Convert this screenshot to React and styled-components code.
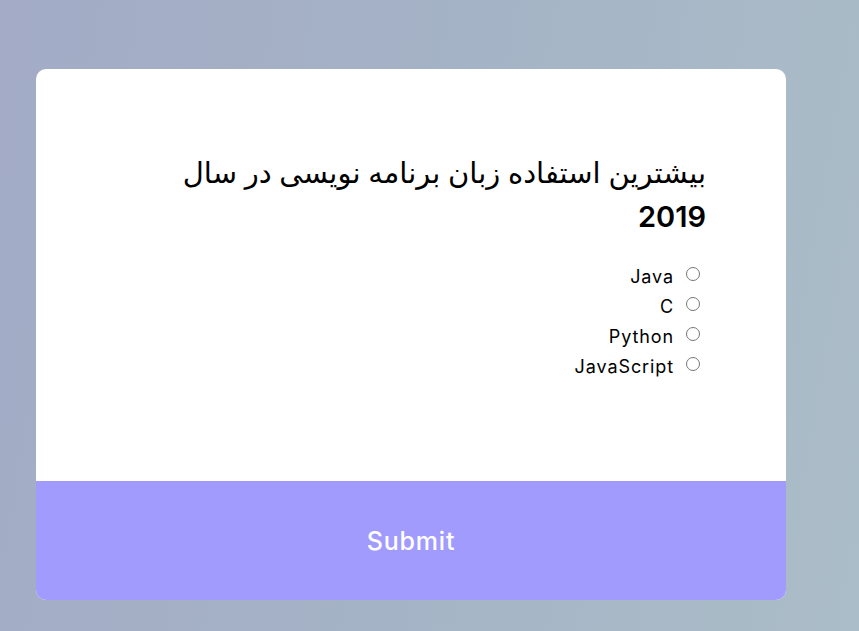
import React from 'react';
import styled, { createGlobalStyle } from 'styled-components';

const GlobalStyle = createGlobalStyle`
  * { box-sizing: border-box; }
  html, body { margin: 0; padding: 0; }
  body {
    min-height: 100vh;
    font-family: "Inter", "DejaVu Sans", "Noto Sans", sans-serif;
    background: linear-gradient(100deg, #a3abc6 0%, #a5b3c6 50%, #abbdc8 100%);
  }
`;

const Page = styled.div`
  min-height: 631px;
  padding: 69px 73px 31px 36px;
`;

const Card = styled.div`
  width: 750px;
  height: 531px;
  background: #ffffff;
  border-radius: 10px;
  overflow: hidden;
  display: flex;
  flex-direction: column;
`;

const Body = styled.div`
  flex: 1;
  direction: rtl;
  padding: 82px 80px 0 80px;
`;

const Title = styled.h2`
  margin: 0 0 22px;
  max-width: 560px;
  font-size: 29px;
  line-height: 44px;
  font-weight: 500;
  color: #000;
`;

const Year = styled.span`
  font-weight: 600;
`;

const Options = styled.ul`
  list-style: none;
  margin: 0;
  padding: 0;
`;

const Option = styled.li`
  display: flex;
  align-items: center;
  height: 30px;
  font-size: 18px;
  letter-spacing: 0.9px;
  color: #000;
`;

const Radio = styled.input`
  width: 14px;
  height: 14px;
  margin: 0 6px 5px 12px;
`;

const Submit = styled.button`
  height: 119px;
  border: none;
  background: #a29bfe;
  color: #ffffff;
  font-family: inherit;
  font-size: 25px;
  letter-spacing: 0.8px;
  font-weight: 500;
  cursor: pointer;
`;

const answers = ['Java', 'C', 'Python', 'JavaScript'];

export default function App() {
  return (
    <>
      <GlobalStyle />
      <Page>
        <Card>
          <Body>
            <Title>بیشترین استفاده زبان برنامه نویسی در سال <Year>2019</Year></Title>
            <Options>
              {answers.map(a => (
                <Option key={a}>
                  <Radio type="radio" name="answer" id={a} />
                  <label htmlFor={a}>{a}</label>
                </Option>
              ))}
            </Options>
          </Body>
          <Submit>Submit</Submit>
        </Card>
      </Page>
    </>
  );
}
